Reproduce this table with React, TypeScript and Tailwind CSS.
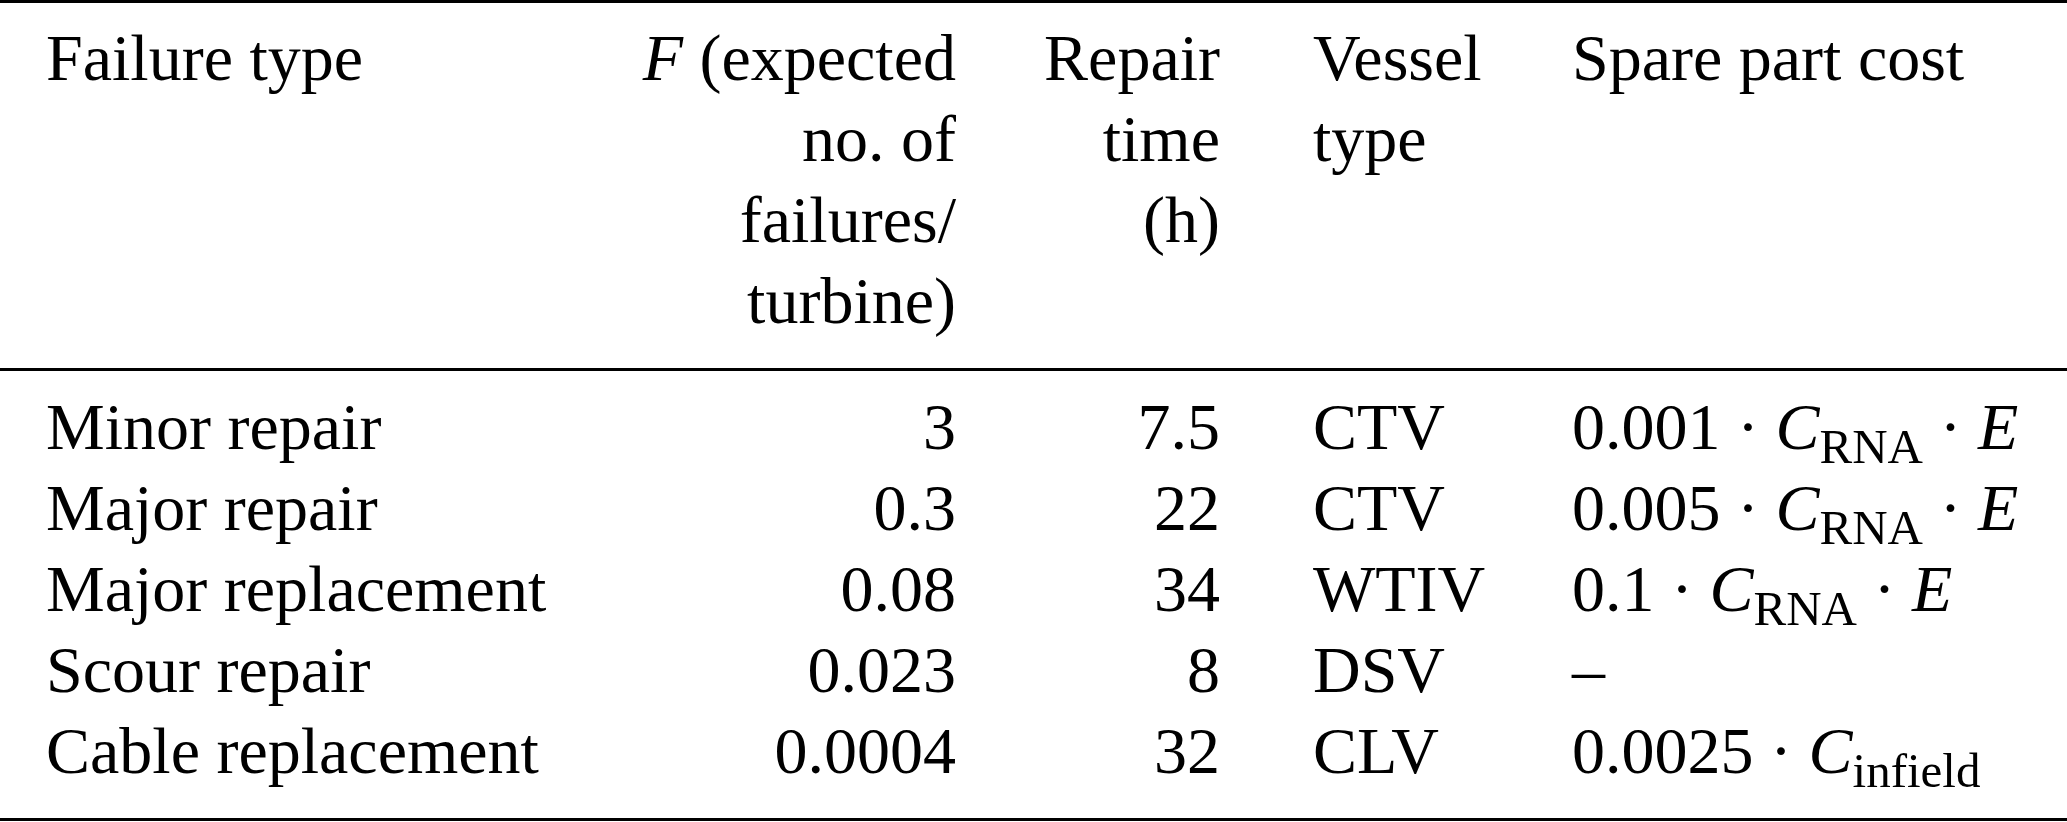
import { ReactNode } from "react";

interface Row {
  failure: string;
  expected: string;
  repairTime: string;
  vessel: string;
  cost: ReactNode;
}

function Cost({ factor, sub, energy }: { factor: string; sub: string; energy?: boolean }) {
  return (
    <span>
      {factor} · <i>C</i>
      <span className="relative top-[14px] text-[49px] leading-none">{sub}</span>
      {energy && (
        <>
          {" "}· <i>E</i>
        </>
      )}
    </span>
  );
}

const rows: Row[] = [
  { failure: "Minor repair", expected: "3", repairTime: "7.5", vessel: "CTV", cost: <Cost factor="0.001" sub="RNA" energy /> },
  { failure: "Major repair", expected: "0.3", repairTime: "22", vessel: "CTV", cost: <Cost factor="0.005" sub="RNA" energy /> },
  { failure: "Major replacement", expected: "0.08", repairTime: "34", vessel: "WTIV", cost: <Cost factor="0.1" sub="RNA" energy /> },
  { failure: "Scour repair", expected: "0.023", repairTime: "8", vessel: "DSV", cost: "–" },
  { failure: "Cable replacement", expected: "0.0004", repairTime: "32", vessel: "CLV", cost: <Cost factor="0.0025" sub="infield" /> }
];

const grid = "grid grid-cols-[580px_376px_264px_352px_1fr]";

export default function App() {
  return (
    <div className="w-[2067px] h-[822px] bg-white text-black font-['Liberation_Serif',serif] text-[66px] leading-[81px]">
      <div className="h-[3px] bg-black" />
      <div className={`${grid} pt-[14px] pb-[27px]`}>
        <div className="pl-[46px]">Failure type</div>
        <div className="text-right">
          <i>F</i> (expected
          <br />
          no. of
          <br />
          failures/
          <br />
          turbine)
        </div>
        <div className="text-right">
          Repair
          <br />
          time
          <br />
          (h)
        </div>
        <div className="pl-[93px]">
          Vessel
          <br />
          type
        </div>
        <div>Spare part cost</div>
      </div>
      <div className="h-[3px] bg-black" />
      <div className="pt-[15px] pb-[27px]">
        {rows.map((row) => (
          <div key={row.failure} className={grid}>
            <div className="pl-[46px]">{row.failure}</div>
            <div className="text-right">{row.expected}</div>
            <div className="text-right">{row.repairTime}</div>
            <div className="pl-[93px]">{row.vessel}</div>
            <div className="whitespace-nowrap">{row.cost}</div>
          </div>
        ))}
      </div>
      <div className="h-[3px] bg-black" />
    </div>
  );
}
